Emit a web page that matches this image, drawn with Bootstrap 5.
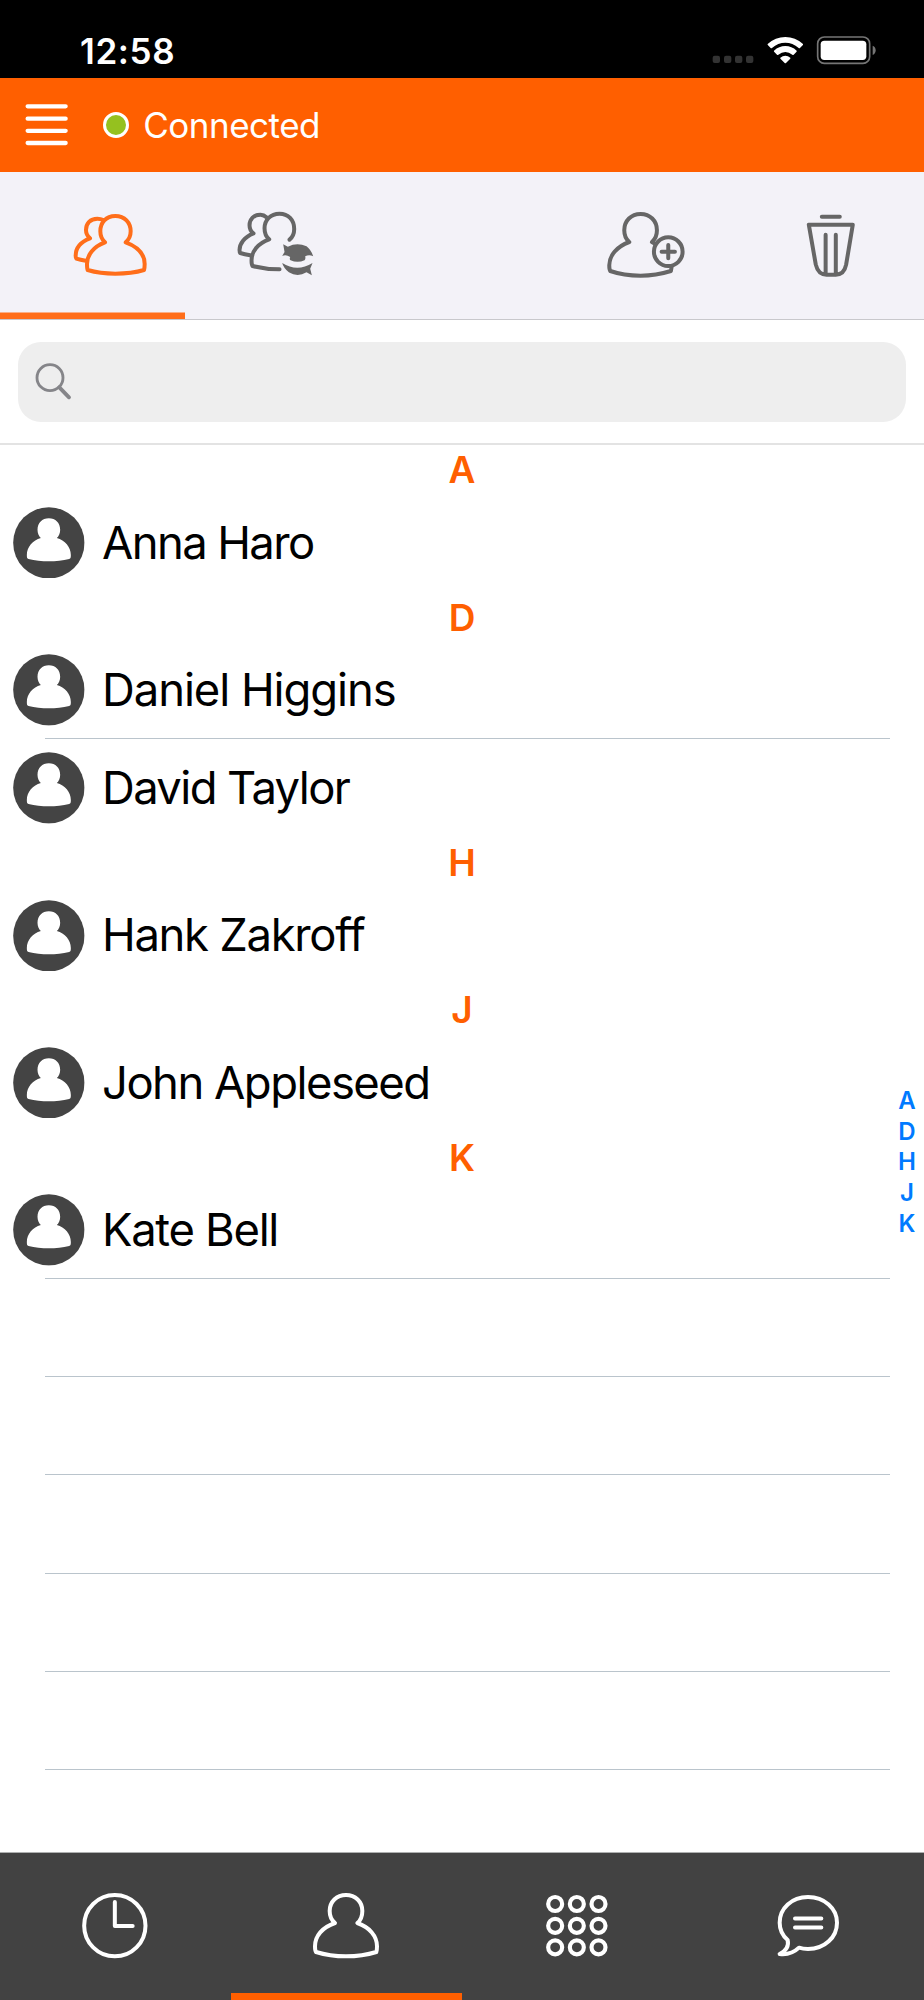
<!DOCTYPE html>
<html lang="en">
<head>
<meta charset="utf-8">
<meta name="viewport" content="width=device-width, initial-scale=1">
<title>Contacts</title>
<link href="https://cdn.jsdelivr.net/npm/bootstrap@5.3.0/dist/css/bootstrap.min.css" rel="stylesheet">
<style>
  body { font-family: Inter, "Liberation Sans", sans-serif; color: #000; background: #fff; }
  .phone { width: 924px; height: 2000px; overflow: hidden; }
  svg { display: block; flex: none; }
  .line-icon { fill: none; stroke: currentColor; stroke-linecap: round; stroke-linejoin: round; }
  .statusbar { height: 78px; padding: 24px 44px 0 80px; background: #000; }
  .clock { font-size: 35px; font-weight: 600; line-height: 54px; letter-spacing: .6px; }
  .appbar { height: 94px; padding-left: 25px; background: #ff5f00; }
  .presence { width: 26px; height: 26px; margin-left: 34.5px; border: 3.5px solid #fff; background: #95c11f; }
  .state { margin-left: 14.5px; font-size: 35px; line-height: 96px; letter-spacing: -.5px; }
  .tools { height: 148px; background: #f3f2f8; border-bottom: 1px solid #c8c8cc; }
  .tool { width: 20%; color: #666; }
  .tool.active { color: #ff6e1a; box-shadow: inset 0 -6.5px #ff6e1a; }
  .searchbar { height: 125px; padding: 22px 18px 0; border-bottom: 2px solid #e3e3e3; }
  .searchfield { height: 80px; padding-left: 17px; border-radius: 23px; background: #eee; color: #858589; }
  .contacts { margin-top: -.6px; }
  .section-head { height: 49.1px; font-size: 37px; font-weight: 600; line-height: 52px; color: #ff5f00; }
  .person { height: 98.2px; padding-left: 13.3px; }
  .person span { margin-left: 17px; font-size: 45.4px; line-height: 98px; white-space: nowrap; letter-spacing: -1.5px; }
  .person .track-wide { letter-spacing: -1.05px; }
  .person .track-mid { letter-spacing: -1.3px; }
  .person .track-tight { letter-spacing: -1.6px; }
  .ruled { background: linear-gradient(#bac4cc, #bac4cc) 45px 100% / 845px 1px no-repeat; }
  .blank { height: 98.2px; }
  .jump { right: 4px; top: 641.6px; width: 26px; font-size: 24px; font-weight: 600; line-height: 30.65px; color: #007aff; }
  .tabs { height: 148px; border-top: 1px solid #aeb0b0; background: #424242; color: #fff; }
  .tabs .active { box-shadow: inset 0 -7px #ff5f00; }
</style>
</head>
<body>
<svg width="0" height="0" class="position-absolute">
  <symbol id="avatar" viewBox="40 200 215 215">
    <circle cx="147.500" cy="307.500" r="107" fill="#444"/>
    <path fill="#fff" d="M147.500 234c-20 0-34 14-34 34 0 10 4 20 10 25-24 6-42 27-42 51 0 8 1 11 5 12 19 5 40 7 61 7s42-2 61-7c4-1 5-4 5-12 0-24-18-45-42-51 6-5 10-15 10-25 0-20-14-34-34-34z"/>
  </symbol>
</svg>
<div class="phone d-flex flex-column">
  <header class="statusbar d-flex justify-content-between text-white flex-shrink-0">
    <span class="clock">12:58</span>
    <svg width="170" height="34" viewBox="90 72 510 102" overflow="visible">
      <g fill="#333"><rect x="98" y="167" width="22" height="22" rx="6"/><rect x="132" y="167" width="22" height="22" rx="6"/><rect x="165" y="167" width="22" height="22" rx="6"/><rect x="198" y="167" width="22" height="22" rx="6"/></g>
      <g fill="#fff">
        <path d="M263 132q23-21 53-21t53 21q1 2-1 4l-8 8q-2 2-4 0-18-16-40-16t-40 16q-2 2-4 0l-8-8q-2-2-1-4z"/>
        <path d="M282 152q15-14 34-14t34 14q1 2-1 4l-8 8q-2 2-4 0-10-8-21-8t-21 8q-2 2-4 0l-8-8q-2-2-1-4z"/>
        <path d="M301 173q7-6 15-6t15 6q1 2-1 4l-12 12q-2 2-4 0l-12-12q-2-2-1-4z"/>
        <rect x="422" y="122" width="137" height="58" rx="11"/>
      </g>
      <rect x="413" y="111" width="156" height="79" rx="20" fill="none" stroke="#757575" stroke-width="5"/>
      <path d="M578 137q9 4 9 14t-9 14z" fill="#757575"/>
    </svg>
  </header>
  <nav class="appbar d-flex align-items-center text-white flex-shrink-0">
    <svg class="line-icon" width="43.300" height="43.300" viewBox="75 309.500 130 130" stroke-width="13"><path d="M83 319.500h114M83 356.500h114M83 393h114M83 429.500h114"/></svg>
    <span class="presence rounded-circle"></span>
    <span class="state">Connected</span>
  </nav>
  <nav class="tools d-flex flex-shrink-0">
    <a class="tool active"><svg class="line-icon" width="184.800" height="147" viewBox="0 6 554.400 441" stroke-width="12">
      <path d="M346 138C318 138 301 158 301 184C301 198 306 209 315 217C280 230 261 255 261 282Q261 296 263 300C290 308 318 311 346 311S405 308 432 300Q434 294 434 282C434 253 413 230 377 217C387 209 392 198 392 184C392 158 374 138 346 138Z"/>
      <path d="M310 150C304 147 299 146 292 146C271 146 258 160 258 180C258 191 263 199 270 205C241 216 227 236 227 257Q227 264 229 266Q241 270 257 272"/></svg></a>
    <a class="tool"><svg class="line-icon" width="184.800" height="147" viewBox="554.400 6 554.400 441" stroke-width="12">
      <path d="M868 209C878 201 882 190 882 177C882 150 864 131 838 131C811 131 793 150 793 175C793 189 798 201 807 208C773 220 754 244 754 271Q754 284 757 288C784 295 811 298 838 298"/>
      <path d="M801 143C795 138 788 134 781 134C761 134 748 147 748 166C748 177 752 185 760 190C732 201 718 221 718 240Q718 247 720 249Q733 253 750 256"/>
      <g fill="currentColor" stroke="none"><path d="M849 223L863 230Q891 216 919 229Q933 240 939 259Q927 252 915 259Q917 267 913 271Q892 280 871 271Q867 268 870 261Q857 252 846 258L853 246Z"/>
      <path d="M846 279Q891 307 937 279L930 296L935 316L919 307Q892 323 866 307Q850 294 846 279Z"/></g></svg></a>
    <span class="tool"></span>
    <a class="tool"><svg class="line-icon" width="184.800" height="147" viewBox="-16.800 6 554.400 441" stroke-width="12">
      <path d="M285 221L277 216C287 208 292 196 292 181C292 152 271 132 243 132S194 152 194 181C194 196 199 208 209 216C171 230 149 257 149 286Q149 299 152 303C181 313 212 317 243 317S305 312 334 303L336 291"/>
      <circle cx="326" cy="245" r="43"/><path d="M326 225v40M306 245h40"/></svg></a>
    <a class="tool"><svg class="line-icon" width="184.800" height="147" viewBox="537.600 6 554.400 441" stroke-width="12">
      <path d="M786 140h54M747 164H879L859 284Q853 314 828 314H800Q775 314 768 284ZM797.500 194V311M828 194V311"/></svg></a>
  </nav>
  <div class="searchbar flex-shrink-0">
    <div class="searchfield d-flex align-items-center">
      <svg class="line-icon" width="38" height="38" viewBox="105 578 114 114" stroke-width="8.500"><circle cx="150" cy="622" r="39"/><path d="M178 651L207 681" stroke-width="11.500"/></svg>
    </div>
  </div>
  <main class="contacts flex-fill position-relative overflow-hidden">
    <div class="section-head text-center">A</div>
    <div class="person d-flex align-items-center"><svg width="71.700" height="71.700"><use href="#avatar"/></svg><span class="track-tight">Anna Haro</span></div>
    <div class="section-head text-center">D</div>
    <div class="person ruled d-flex align-items-center"><svg width="71.700" height="71.700"><use href="#avatar"/></svg><span class="track-wide">Daniel Higgins</span></div>
    <div class="person d-flex align-items-center"><svg width="71.700" height="71.700"><use href="#avatar"/></svg><span class="track-tight">David Taylor</span></div>
    <div class="section-head text-center">H</div>
    <div class="person d-flex align-items-center"><svg width="71.700" height="71.700"><use href="#avatar"/></svg><span class="track-mid">Hank Zakroff</span></div>
    <div class="section-head text-center">J</div>
    <div class="person d-flex align-items-center"><svg width="71.700" height="71.700"><use href="#avatar"/></svg><span>John Appleseed</span></div>
    <div class="section-head text-center">K</div>
    <div class="person ruled d-flex align-items-center"><svg width="71.700" height="71.700"><use href="#avatar"/></svg><span class="track-mid">Kate Bell</span></div>
    <div class="blank ruled"></div><div class="blank ruled"></div><div class="blank ruled"></div><div class="blank ruled"></div><div class="blank ruled"></div>
    <div class="jump position-absolute d-flex flex-column text-center"><span>A</span><span>D</span><span>H</span><span>J</span><span>K</span></div>
  </main>
  <nav class="tabs d-flex flex-shrink-0">
    <a class="flex-fill text-white"><svg class="line-icon" width="231" height="147" viewBox="0 339 693 441" stroke-width="12"><circle cx="344.500" cy="557" r="92"/><path d="M344.500 486V558H398"/></svg></a>
    <a class="active flex-fill text-white"><svg class="line-icon" width="231" height="147" viewBox="693 339 693 441" stroke-width="12"><path d="M1038 465C1010 465 989 485 989 513C989 528 995 541 1005 549C967 562 945 588 945 619Q945 632 948 636C977 645 1007 649 1038 649S1100 645 1129 636Q1131 632 1131 619C1131 588 1109 562 1072 549C1082 541 1087 528 1087 513C1087 485 1066 465 1038 465Z"/></svg></a>
    <a class="flex-fill text-white"><svg class="line-icon" width="231" height="147" viewBox="0 339 693 441" stroke-width="12.500">
      <circle cx="279.500" cy="492" r="21"/><circle cx="344.500" cy="492" r="21"/><circle cx="409.500" cy="492" r="21"/>
      <circle cx="279.500" cy="557.500" r="21"/><circle cx="344.500" cy="557.500" r="21"/><circle cx="409.500" cy="557.500" r="21"/>
      <circle cx="279.500" cy="622" r="21"/><circle cx="344.500" cy="622" r="21"/><circle cx="409.500" cy="622" r="21"/></svg></a>
    <a class="flex-fill text-white"><svg class="line-icon" width="231" height="147" viewBox="693 339 693 441" stroke-width="12">
      <path d="M999 535.500H1078M999 562.500H1078"/><path d="M1038 471C989 471 953 505 953 548C953 569 962 587 977 600Q983 627 953 642Q987 646 1011 623C1020 626 1029 627 1038 627C1088 627 1125 592 1125 548C1125 505 1087 471 1038 471Z"/></svg></a>
  </nav>
</div>
<script src="https://cdn.jsdelivr.net/npm/bootstrap@5.3.0/dist/js/bootstrap.bundle.min.js"></script>
</body>
</html>
